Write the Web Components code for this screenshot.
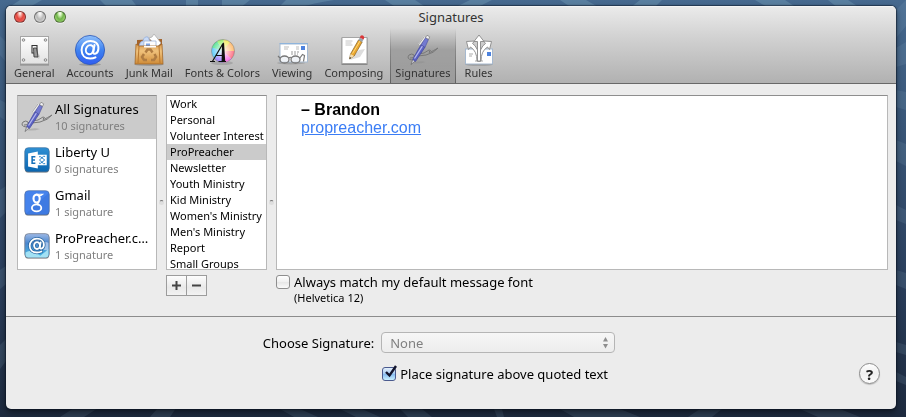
<!DOCTYPE html>
<html lang="en">
<head>
<meta charset="utf-8">
<title>Signatures</title>
<style>
    html, body {
        margin: 0;
        min-height: 100%;
    }
    body {
        box-sizing: border-box;
        padding: 6px 10px 8px 6px;
        background: #1e2b3f;
        color: #000;
        font: 13px/16px "Noto Sans", "Open Sans", sans-serif;
    }
</style>
</head>
<body>

<desktop-backdrop></desktop-backdrop>

<prefs-window heading="Signatures">
    <toolbar-item slot="toolbar" icon="general">General</toolbar-item>
    <toolbar-item slot="toolbar" icon="accounts">Accounts</toolbar-item>
    <toolbar-item slot="toolbar" icon="junk">Junk Mail</toolbar-item>
    <toolbar-item slot="toolbar" icon="fonts">Fonts &amp; Colors</toolbar-item>
    <toolbar-item slot="toolbar" icon="viewing">Viewing</toolbar-item>
    <toolbar-item slot="toolbar" icon="composing">Composing</toolbar-item>
    <toolbar-item slot="toolbar" icon="signatures" selected>Signatures</toolbar-item>
    <toolbar-item slot="toolbar" icon="rules">Rules</toolbar-item>

    <signature-panes>
        <account-row slot="accounts" icon="signatures" selected>All Signatures<span slot="count">10 signatures</span></account-row>
        <account-row slot="accounts" icon="exchange">Liberty U<span slot="count">0 signatures</span></account-row>
        <account-row slot="accounts" icon="google">Gmail<span slot="count">1 signature</span></account-row>
        <account-row slot="accounts" icon="mail">ProPreacher.com<span slot="count">1 signature</span></account-row>

        <signature-row slot="names">Work</signature-row>
        <signature-row slot="names">Personal</signature-row>
        <signature-row slot="names">Volunteer Interest</signature-row>
        <signature-row slot="names" selected>ProPreacher</signature-row>
        <signature-row slot="names">Newsletter</signature-row>
        <signature-row slot="names">Youth Ministry</signature-row>
        <signature-row slot="names">Kid Ministry</signature-row>
        <signature-row slot="names">Women's Ministry</signature-row>
        <signature-row slot="names">Men's Ministry</signature-row>
        <signature-row slot="names">Report</signature-row>
        <signature-row slot="names">Small Groups</signature-row>

        <signature-editor slot="editor"></signature-editor>
        <mac-checkbox slot="options">Always match my default message font<span slot="note">(Helvetica 12)</span></mac-checkbox>
    </signature-panes>

    <signature-options slot="footer"></signature-options>
</prefs-window>

<script>
const ICONS = {
    general: `
        <svg viewBox="0 0 32 32">
            <defs><linearGradient id="p" x2="0" y2="1"><stop stop-color="#fff"/><stop offset="1" stop-color="#e2e2e2"/></linearGradient></defs>
            <rect x="2" y="3" width="29" height="28.500" fill="#888"/>
            <rect x="2.500" y="2.500" width="28" height="27.500" fill="url(#p)" stroke="#a5a5a5"/>
            <g fill="#ddd" stroke="#777" stroke-width=".8"><circle cx="5.500" cy="6" r="1.300"/><circle cx="27.500" cy="6" r="1.300"/><circle cx="5.500" cy="26" r="1.300"/><circle cx="27.500" cy="26" r="1.300"/></g>
            <path d="M17 14l5 8-1 3-6-4z" fill="#ccc"/>
            <path d="M14 11.500h5V19h-5z" fill="#f4f4f4" stroke="#333" stroke-width="1.100"/>
            <path d="M15.500 14h3l1.500 9h-4z" fill="#999" stroke="#333" stroke-width=".8"/>
        </svg>`,
    accounts: `
        <svg viewBox="0 0 32 32">
            <defs><linearGradient id="b" x2="0" y2="1"><stop stop-color="#8fc0fb"/><stop offset=".5" stop-color="#3f83f0"/><stop offset="1" stop-color="#2f5cf0"/></linearGradient></defs>
            <ellipse cx="16" cy="30.500" rx="11" ry="1.500" fill="#777" opacity=".5"/>
            <circle cx="16" cy="16" r="14.600" fill="url(#b)" stroke="#2b57b8" stroke-width=".8"/>
            <g fill="none" stroke="#fff" stroke-width="2" stroke-linecap="round">
                <ellipse cx="15.700" cy="15.700" rx="3.800" ry="4.600" transform="rotate(18 15.700 15.700)"/>
                <path d="M20.500 11l-1.300 7c-.3 3.300 5 2 5.200-3.400C24.600 9.400 20.800 7 16.500 7 11 7 7.600 11 7.600 16c0 5.500 3.600 8.600 8.500 8.600 2 0 3.900-.4 5.400-1.200"/>
            </g>
        </svg>`,
    junk: `
        <svg viewBox="0 0 32 32">
            <defs><linearGradient id="j" x2="0" y2="1"><stop stop-color="#d99b50"/><stop offset=".35" stop-color="#f0c27c"/><stop offset="1" stop-color="#cf8b38"/></linearGradient></defs>
            <ellipse cx="16" cy="30.500" rx="15" ry="1.500" fill="#777" opacity=".5"/>
            <path d="M4 6l25-1v7H4z" fill="#a2622a"/>
            <path d="M6 12q1-5 4-5 1-5 5-4l4 9z" fill="#c9dbf7" stroke="#8fa9d6" stroke-width=".7"/>
            <path d="M16 4l3-1 2-3 7 9-4 4z" fill="#fff" stroke="#a9a9a9" stroke-width=".7"/>
            <path d="M11 7h12v8H10.500z" fill="#fdfdfd" stroke="#9db3d6" stroke-width=".8"/>
            <path d="M13 9.500h4V12h-4z" fill="#7ca5e6"/>
            <path d="M3 10l3 2h20l3-2 1 20H2z" fill="url(#j)" stroke="#a3682a" stroke-width=".8"/>
            <path d="M11 12h12v1.500H11z" fill="#fdfdfd"/>
            <path d="M6 12l-1 17M26 12l1 17" stroke="#b97830" fill="none"/>
            <g fill="none" stroke="#b07c42" stroke-width="2.500"><path d="M12.500 18.500l2-3h3l2 3"/><path d="M21.500 20l1.500 3-2 3h-3"/><path d="M14 26h-3l-2-3 2-3"/></g>
        </svg>`,
    fonts: `
        <svg viewBox="0 0 32 32">
            <defs>
                <clipPath id="c"><circle cx="17" cy="17" r="11.500"/></clipPath>
                <radialGradient id="w"><stop stop-color="#fff" stop-opacity=".95"/><stop offset="1" stop-color="#fff" stop-opacity=".1"/></radialGradient>
            </defs>
            <ellipse cx="16" cy="29" rx="11" ry="2" fill="#777" opacity=".35"/>
            <g clip-path="url(#c)">
                <path d="M17 17L3 13 8 2z" fill="#42e087"/><path d="M17 17L8 2h10z" fill="#8df05a"/><path d="M17 17l1-15h11z" fill="#f2e84a"/>
                <path d="M17 17L29 2l4 15z" fill="#ffb25a"/><path d="M17 17h16l-3 12z" fill="#ff5d73"/><path d="M17 17l13 12-13 4z" fill="#f65ae0"/>
                <path d="M17 17v16L4 28z" fill="#8c6cff"/><path d="M17 17L4 29V13z" fill="#45c5fa"/>
                <circle cx="17" cy="17" r="12" fill="url(#w)"/>
            </g>
            <circle cx="17" cy="17" r="11.500" fill="none" stroke="#888" stroke-width=".6"/>
            <path d="M4 27.500h5M12.500 27.500H20M6.500 27.300L17 9.500M10 21.500h6" stroke="#111" stroke-width="1.200" fill="none"/>
            <path d="M16 10.500l2-2.300 1.200 19.300h-3.600z" fill="#111"/>
        </svg>`,
    viewing: `
        <svg viewBox="0 0 32 32">
            <ellipse cx="15" cy="29" rx="14" ry="1.500" fill="#777" opacity=".4"/>
            <rect x="4" y="10" width="27.500" height="18" fill="#fff" stroke="#a6b9cf"/>
            <path d="M3.500 9.500h28.500" stroke="#8eb4dc"/>
            <rect x="25" y="12" width="4" height="4" fill="#4e83de"/>
            <path d="M8 13h5M8 15h4M20 13h3M20 15h3" stroke="#bbb"/>
            <path d="M15 18h8M15 20h7" stroke="#999" stroke-dasharray="2 1"/>
            <g fill="#e9eef3" fill-opacity=".7" stroke="#777" stroke-width="1.300"><ellipse cx="8.500" cy="25.500" rx="4.500" ry="3.500"/><ellipse cx="19.500" cy="25.500" rx="4.500" ry="3.500"/></g>
            <path d="M13 24q1.500-1.500 2.500 0M4 24l-2-2M23.500 24.500l3-4 2 1-1 6" stroke="#777" stroke-width="1.200" fill="none"/>
        </svg>`,
    composing: `
        <svg viewBox="0 0 32 32">
            <rect x="3.500" y="4" width="26" height="27" fill="#888"/>
            <rect x="4" y="3.500" width="25" height="26" fill="#fff" stroke="#a5a5a5"/>
            <path d="M7.500 7h7M7.500 9h6M7.500 11h7" stroke="#b5b5b5" stroke-width=".8"/>
            <path d="M12 26l10-3 5-8-6 1z" fill="#ddd"/>
            <path d="M11.500 25l1-5L20.500 6l3.700 2-8 14z" fill="#eba72f" stroke="#80602a" stroke-width=".7"/>
            <path d="M14.500 19.500L22 7" stroke="#ffd979"/>
            <path d="M11.500 25l1-5 3.700 2z" fill="#f4ddb0"/><path d="M11.500 25l.4-2 1.500.9z" fill="#222"/>
            <path d="M20.500 6l1.300-2.500 3.700 2L24.200 8z" fill="#9aa4ad"/>
            <path d="M21.800 3.500l.8-1.700q2.400-1.500 3.800 1.800l-.9 1.900z" fill="#d93638"/>
        </svg>`,
    signatures: `
        <svg viewBox="0 0 32 32">
            <path d="M5 29q8-3 14-1-7 2.500-14 1z" fill="#888" opacity=".4"/>
            <path d="M5 26Q-1 25 2 21q3-2 5 0 1 3-4 3M7 22q6-3 10-3l5-3q3 0 0 2-1 2 9-4-4 5-12 7-6 1-12 1z" fill="none" stroke="#777" stroke-width="1"/>
            <path d="M4 30.500l2-5.500 2.500 1.700z" fill="#d8d8e2" stroke="#555" stroke-width=".6"/>
            <path d="M5.700 25.500L14 10.500l4 2.700L8.500 27.500z" fill="#5b62c2" stroke="#3b3f98" stroke-width=".6"/>
            <path d="M7.500 24.500L15.500 12" stroke="#b5b9f0" stroke-width="1.300"/>
            <path d="M14 11l4.500-7.500 3 2-3.500 7.800z" fill="#737ad0" stroke="#474c9a" stroke-width=".6"/>
            <path d="M18.500 3.500l1.500-2.200 2.700 1.500-1.200 2.600z" fill="#f2f2f5" stroke="#666" stroke-width=".6"/>
            <path d="M17.500 3L12 10.500" stroke="#eee" stroke-width="2"/><path d="M17 3L11.500 10.500" stroke="#777" stroke-width=".6"/>
        </svg>`,
    rules: `
        <svg viewBox="0 0 32 32">
            <ellipse cx="16" cy="30.500" rx="14" ry="1.300" fill="#777" opacity=".5"/>
            <rect x="2.500" y="15" width="27" height="15" fill="#fff" stroke="#a6b9cf"/>
            <rect x="24" y="18" width="4" height="4" fill="#4e83de"/>
            <path d="M6 20h4M6 22h3M12 27h8" stroke="#aaa"/>
            <g fill="#fff" stroke="#888" stroke-width=".9" stroke-linejoin="round">
                <path d="M14 27q0-10-6.500-14L5.500 15.500 3.500 7.500l8-.5-2 2.500Q15.500 13 16.500 27z"/>
                <path d="M18 27q0-10 6.500-14l2 2.500 2-8-8-.5 2 2.500Q16.500 13 15.500 27z"/>
                <path d="M14.500 27V7.500H11L16 1l5 6.500h-3.500V27z"/>
            </g>
        </svg>`,
    exchange: `
        <svg viewBox="0 0 32 32">
            <defs><linearGradient id="e" x2="0" y2="1"><stop stop-color="#2f8fd3"/><stop offset="1" stop-color="#0b66b0"/></linearGradient></defs>
            <rect x="1" y="1.500" width="30" height="30" rx="4.500" fill="#777"/>
            <rect x="1" y=".8" width="30" height="29.600" rx="4.500" fill="url(#e)" stroke="#3b6f9d" stroke-width=".8"/>
            <path d="M16 9.500h12v13H16z" fill="#fff"/>
            <path d="M18.500 12h2l5 4-5 4h-2M26 11.500h-2L19 16l5 4.500h2" fill="none" stroke="#2480c6" stroke-width="1.200"/>
            <path d="M5 8l12-2.500v21L5 24z" fill="#fff"/>
            <path d="M14 12h-4v8h4M10 16h3.500" fill="none" stroke="#1470ba" stroke-width="1.900"/>
        </svg>`,
    google: `
        <svg viewBox="0 0 32 32">
            <rect x="1" y="1.500" width="30" height="30" rx="4.500" fill="#777"/>
            <rect x="1" y=".8" width="30" height="29.600" rx="4.500" fill="#4583ec" stroke="#4d6da5" stroke-width=".8"/>
            <path d="M1.500 30L31 3v23q0 4-4.500 4z" fill="#316bd2" opacity=".35"/>
            <g fill="none" stroke="#fff">
                <ellipse cx="15.500" cy="10.500" rx="3.800" ry="4.800" stroke-width="2.600"/>
                <path d="M15 5.200h8l-2 1.500h-3" stroke-width="1.300"/>
                <path d="M18.500 14.500q-3.500 2.500-.5 4" stroke-width="2.200"/>
                <ellipse cx="15.500" cy="22" rx="5.800" ry="4.200" stroke-width="2.200"/>
            </g>
        </svg>`,
    mail: `
        <svg viewBox="0 0 32 32">
            <defs><linearGradient id="m" x2="0" y2="1"><stop stop-color="#9db9e6"/><stop offset=".4" stop-color="#4a86cd"/><stop offset="1" stop-color="#45bde8"/></linearGradient></defs>
            <rect x="1" y="1.500" width="30" height="30" rx="4.500" fill="#777"/>
            <rect x="1" y=".8" width="30" height="29.600" rx="4.500" fill="url(#m)" stroke="#767f91"/>
            <path d="M2 24q5-4 9 0 6 1 9 4l10-8v7q0 3-3 3H5q-3 0-3-3z" fill="#b9eef9" opacity=".8"/>
            <path d="M22 13q4-3 8-1v9q-5 1-9-2z" fill="#c9d9f4" opacity=".7"/>
            <g fill="none" stroke-linecap="round">
                <g stroke="#27649f" stroke-width="4"><ellipse cx="16" cy="15.500" rx="3.600" ry="4.200"/><path d="M20.500 11.500l-1 6c0 3 5 2 5-3 0-5-4-7.500-8.500-7.500-5.500 0-9 4-9 8.700C7 21 11 24 16 24q3 0 5.500-1.200"/></g>
                <g stroke="#fff" stroke-width="2.200"><ellipse cx="16" cy="15.500" rx="3.600" ry="4.200"/><path d="M20.500 11.500l-1 6c0 3 5 2 5-3 0-5-4-7.500-8.500-7.500-5.500 0-9 4-9 8.700C7 21 11 24 16 24q3 0 5.500-1.200"/></g>
            </g>
        </svg>`
};

class DesktopBackdrop extends HTMLElement {
    constructor() {
        super();
        const shadow = this.attachShadow({ mode: 'open' });
        shadow.innerHTML = `
        <style>
            :host {
                position: fixed;
                inset: 0;
                z-index: -1;
                background: linear-gradient(#46698f, #395678 30%, #2b405e 65%, #1d2a3e);
            }
            svg { display: block; width: 100%; height: 100%; }
        </style>
        <svg viewBox="0 0 906 417" preserveAspectRatio="none" aria-hidden="true">
            <g fill="#7fa9bf" opacity=".35">
                <path d="M20 0h22l-14 8H8zM100 0h32l6 8h-30zM186 0h12v8h-12zM222 0h28l-10 8h-18zM286 0h48q-22 3-34 8h-22zM385 0h30l12 8h-30zM470 0h22l-16 8h-22zM560 0h26l14 8h-28zM640 0h22l-8 8h-24zM755 0h30l12 8h-28zM828 0h20l12 8h-22z"/>
            </g>
            <g fill="#8fb1c4" opacity=".14">
                <path d="M896 10l10-10v26l-10 12zM896 48l10-6v22l-10 3zM896 90l10 2v18l-10-3zM896 140l10 4v22l-10-5zM896 205l10 5v14l-10-4zM896 270l10 3v16l-10-4zM896 342l10 3v10l-10-3zM896 372l10 5v8l-10-4z"/>
                <path d="M0 36l6 6v20l-6-7zM0 100l6 3v18l-6-4zM0 190l6-4v26l-6 6zM0 270l6-4v18l-6 5zM0 345l6-6v22l-6 8z"/>
                <path d="M60 417l14-9h24l-14 9zM150 417l8-9h18l-6 9zM280 409h20l18 8h-24zM340 409h22l18 8h-24zM400 409h22l10 8h-24zM494 409h8l2 8h-7zM560 409h60l20 8h-66zM700 409h22l-10 8h-24zM800 409h40l20 8h-42z"/>
            </g>
        </svg>
        `;
    }
}

class PrefsWindow extends HTMLElement {
    constructor() {
        super();
        const shadow = this.attachShadow({ mode: 'open' });
        shadow.innerHTML = `
        <style>
            :host {
                display: block;
                overflow: hidden;
                border-radius: 5px;
                background: #ececec;
                box-shadow: 0 0 1px 1px rgba(10, 20, 35, .55), 0 3px 6px rgba(0, 0, 0, .5);
            }
            header {
                background: linear-gradient(#ebebeb, #d2d2d2 40%, #b1b1b1);
                border-bottom: 1px solid #686868;
                box-shadow: inset 0 1px #f5f5f5;
            }
            .titlebar {
                display: grid;
                grid-template-columns: 1fr auto 1fr;
                align-items: center;
                height: 22px;
                padding: 0 8px;
            }
            h1 { margin: 0; font: inherit; color: #333; }
            .lights { display: flex; gap: 8px; }
            .lights button {
                box-sizing: border-box;
                width: 12px;
                height: 12px;
                padding: 0;
                border: 1px solid rgba(0, 0, 0, .45);
                border-radius: 50%;
                box-shadow: 0 1px rgba(255, 255, 255, .5);
            }
            .close { background: radial-gradient(ellipse at 50% 12%, #fff 0, #f8b8b0 18%, #e2483f 48%, #f0605a 80%); }
            .minimize { background: radial-gradient(ellipse at 50% 12%, #fff 0, #e6e6e6 22%, #b9b9b9 50%, #dedede 90%); }
            .zoom { background: radial-gradient(ellipse at 50% 12%, #fff 0, #d0f0b4 20%, #70b44a 48%, #a6dd78 90%); }
            nav { display: flex; gap: 2px; padding-left: 3px; }
            footer { border-top: 1px solid #8c8c8c; }
        </style>
        <header>
            <div class="titlebar">
                <div class="lights">
                    <button type="button" class="close" aria-label="Close"></button>
                    <button type="button" class="minimize" aria-label="Minimize"></button>
                    <button type="button" class="zoom" aria-label="Zoom"></button>
                </div>
                <h1></h1>
            </div>
            <nav><slot name="toolbar"></slot></nav>
        </header>
        <main><slot></slot></main>
        <footer><slot name="footer"></slot></footer>
        `;
    }

    connectedCallback() {
        this.shadowRoot.querySelector('h1').textContent = this.getAttribute('heading');
    }
}

class ToolbarItem extends HTMLElement {
    constructor() {
        super();
        const shadow = this.attachShadow({ mode: 'open' });
        shadow.innerHTML = `
        <style>
            :host { display: block; }
            button {
                display: flex;
                flex-direction: column;
                align-items: center;
                box-sizing: border-box;
                height: 55px;
                padding: 6px 5px 0;
                border: 0;
                background: none;
                color: #333;
                font: inherit;
                font-size: 11px;
                line-height: 14px;
                white-space: nowrap;
            }
            :host([selected]) button {
                background:
                    linear-gradient(rgba(60, 60, 60, 0), rgba(60, 60, 60, .6)) left / 1px 100% no-repeat,
                    linear-gradient(rgba(60, 60, 60, 0), rgba(60, 60, 60, .6)) right / 1px 100% no-repeat,
                    linear-gradient(rgba(0, 0, 0, 0), rgba(0, 0, 0, .2) 40%, rgba(0, 0, 0, .12));
            }
            svg { display: block; width: 32px; height: 32px; }
        </style>
        <button type="button"><span class="icon"></span><slot></slot></button>
        `;
    }

    connectedCallback() {
        this.shadowRoot.querySelector('.icon').innerHTML = ICONS[this.getAttribute('icon')];
    }
}

class SignaturePanes extends HTMLElement {
    constructor() {
        super();
        const shadow = this.attachShadow({ mode: 'open' });
        shadow.innerHTML = `
        <style>
            :host {
                display: grid;
                grid-template-columns: 140px 9px 101px 9px 1fr;
                padding: 11px 8px 6px 11px;
            }
            .pane {
                box-sizing: border-box;
                height: 175px;
                overflow: hidden;
                border: 1px solid #b8b8b8;
                border-top-color: #8e8e8e;
                background: #fff;
            }
            .splitter { display: grid; place-items: center; }
            .splitter::before {
                content: "";
                box-sizing: border-box;
                width: 5px;
                height: 5px;
                border: 1px solid transparent;
                border-top-color: #777;
                border-radius: 50%;
                background: #dedede;
            }
            .buttons { display: flex; margin-top: 5px; }
            .buttons button {
                display: grid;
                place-items: center;
                box-sizing: border-box;
                width: 21px;
                height: 21px;
                padding: 0;
                border: 1px solid #9c9c9c;
                background: linear-gradient(#fdfdfd, #e9e9e9 60%, #f3f3f3);
            }
            .buttons button + button { margin-left: -1px; }
            .options { margin-top: 4px; height: 36px; }
        </style>
        <div class="pane"><slot name="accounts"></slot></div>
        <div class="splitter"></div>
        <div>
            <div class="pane" role="listbox" aria-label="Signatures"><slot name="names"></slot></div>
            <div class="buttons">
                <button type="button" aria-label="Add signature"><svg width="9" height="9"><path d="M0 4.500h9M4.500 0v9" stroke="#444" stroke-width="2"/></svg></button>
                <button type="button" aria-label="Remove signature"><svg width="9" height="9"><path d="M0 4.500h9" stroke="#444" stroke-width="2"/></svg></button>
            </div>
        </div>
        <div class="splitter"></div>
        <div>
            <div class="pane"><slot name="editor"></slot></div>
            <div class="options"><slot name="options"></slot></div>
        </div>
        `;
    }
}

class AccountRow extends HTMLElement {
    constructor() {
        super();
        const shadow = this.attachShadow({ mode: 'open' });
        shadow.innerHTML = `
        <style>
            :host { display: block; }
            button {
                display: grid;
                grid-template-columns: 26px minmax(0, 1fr);
                column-gap: 5px;
                align-items: center;
                box-sizing: border-box;
                width: 100%;
                height: 43px;
                padding: 0 2px 2px 6px;
                border: 0;
                background: none;
                color: inherit;
                font: inherit;
                text-align: left;
            }
            :host([selected]) button { background: #cbcbcb; }
            svg { display: block; width: 26px; height: 26px; }
            :host([selected]) svg { width: 32px; height: 32px; margin: 0 -3px; }
            .name, .count { display: block; }
            .name { overflow: hidden; text-overflow: ellipsis; white-space: nowrap; line-height: 18px; }
            .count { color: #7f7f7f; font-size: 11px; line-height: 15px; }
        </style>
        <button type="button">
            <span class="icon"></span>
            <span>
                <span class="name"><slot></slot></span>
                <span class="count"><slot name="count"></slot></span>
            </span>
        </button>
        `;
    }

    connectedCallback() {
        this.shadowRoot.querySelector('.icon').innerHTML = ICONS[this.getAttribute('icon')];
    }
}

class SignatureRow extends HTMLElement {
    constructor() {
        super();
        const shadow = this.attachShadow({ mode: 'open' });
        shadow.innerHTML = `
        <style>
            :host {
                display: block;
                height: 16px;
                padding-left: 3px;
                font-size: 11px;
                line-height: 16px;
                white-space: nowrap;
            }
            :host([selected]) { background: #cbcbcb; }
        </style>
        <slot></slot>
        `;
    }

    connectedCallback() {
        this.setAttribute('role', 'option');
        this.setAttribute('aria-selected', this.hasAttribute('selected'));
    }
}

class SignatureEditor extends HTMLElement {
    constructor() {
        super();
        const shadow = this.attachShadow({ mode: 'open' });
        shadow.innerHTML = `
        <style>
            :host { display: block; height: 100%; }
            div {
                box-sizing: border-box;
                height: 100%;
                padding: 5px 24px;
                font: 16px/18px "Liberation Sans", Helvetica, sans-serif;
            }
            a { color: #3b7df5; }
        </style>
        <div role="textbox" aria-multiline="true" aria-label="Signature" contenteditable="true" spellcheck="false"><b>– Brandon</b><br><a href="#propreacher">propreacher.com</a></div>
        `;
    }
}

class MacCheckbox extends HTMLElement {
    constructor() {
        super();
        const shadow = this.attachShadow({ mode: 'open' });
        shadow.innerHTML = `
        <style>
            :host { display: block; }
            label { display: flex; align-items: center; gap: 4px; white-space: nowrap; }
            input {
                appearance: none;
                box-sizing: border-box;
                width: 14px;
                height: 14px;
                margin: 0;
                border: 1px solid #8e8e8e;
                border-radius: 3px;
                background: linear-gradient(#fff, #f0f0f0 50%, #e6e6e6 51%, #fafafa);
            }
            .box { position: relative; flex: none; height: 14px; display: flex; }
            svg { position: absolute; left: 1px; top: -2px; display: none; pointer-events: none; }
            input:checked { border-color: #4a5a8e; background: linear-gradient(#e4effb, #a3caf2 50%, #85bbf0 51%, #c9f0ff); }
            input:checked + svg { display: block; }
            .note { margin-left: 18px; font-size: 11px; }
        </style>
        <label>
            <span class="box"><input type="checkbox"><svg width="14" height="14"><path d="M3 7l3.500 3.500L13 1" fill="none" stroke="#12142c" stroke-width="2.400"/></svg></span>
            <slot></slot>
        </label>
        <div class="note"><slot name="note"></slot></div>
        `;
    }

    connectedCallback() {
        this.shadowRoot.querySelector('input').checked = this.hasAttribute('checked');
    }
}

class SignatureOptions extends HTMLElement {
    constructor() {
        super();
        const shadow = this.attachShadow({ mode: 'open' });
        shadow.innerHTML = `
        <style>
            :host {
                display: grid;
                grid-template-columns: 10fr 234px 7fr;
                grid-template-rows: 21px 21px;
                gap: 10px 7px;
                align-items: center;
                padding: 15px 16px 25px 0;
            }
            label { text-align: right; }
            .popup { position: relative; }
            select {
                appearance: none;
                display: block;
                box-sizing: border-box;
                width: 100%;
                height: 21px;
                padding: 0 8px;
                border: 1px solid #b5b5b5;
                border-radius: 4px;
                background: linear-gradient(#f6f6f6, #ededed);
                color: #808080;
                font: inherit;
                opacity: 1;
            }
            .popup svg { position: absolute; right: 6px; top: 5px; pointer-events: none; }
            mac-checkbox { grid-column: 2; padding-left: 1px; }
            .help {
                justify-self: end;
                box-sizing: border-box;
                width: 21px;
                height: 21px;
                padding: 0;
                border: 1px solid #8a8a8a;
                border-radius: 50%;
                background: linear-gradient(#fff, #efefef 50%, #fcfcfc);
                box-shadow: 0 1px 1px rgba(0, 0, 0, .2);
                color: #222;
                font: bold 15px/18px "Noto Sans", sans-serif;
            }
        </style>
        <label for="choose">Choose Signature:</label>
        <div class="popup">
            <select id="choose" disabled><option>None</option></select>
            <svg width="7" height="12"><path d="M1 4.500L3.500 0 6 4.500zM1 7L3.500 11.500 6 7z" fill="#8e8e8e"/></svg>
        </div>
        <span></span>
        <mac-checkbox checked>Place signature above quoted text</mac-checkbox>
        <button type="button" class="help" aria-label="Help">?</button>
        `;
    }
}

customElements.define('desktop-backdrop', DesktopBackdrop);
customElements.define('prefs-window', PrefsWindow);
customElements.define('toolbar-item', ToolbarItem);
customElements.define('signature-panes', SignaturePanes);
customElements.define('account-row', AccountRow);
customElements.define('signature-row', SignatureRow);
customElements.define('signature-editor', SignatureEditor);
customElements.define('mac-checkbox', MacCheckbox);
customElements.define('signature-options', SignatureOptions);
</script>
</body>
</html>
